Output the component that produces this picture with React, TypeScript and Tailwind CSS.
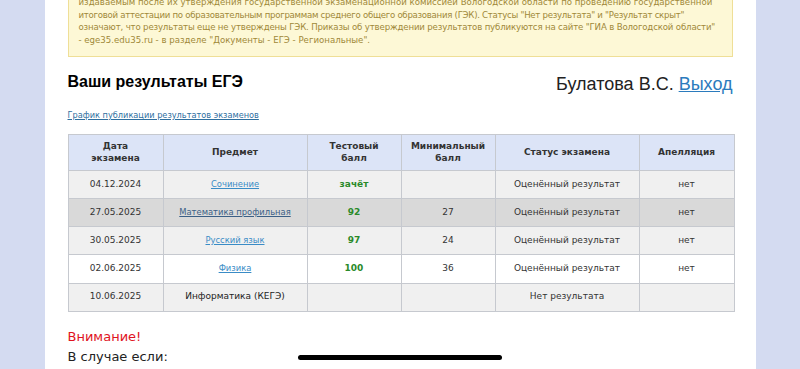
import React from 'react';

interface ExamRow {
    date: string;
    subject: string;
    link?: 'fresh' | 'visited';
    score: string;
    minScore: string;
    status: string;
    appeal: string;
    bg: string;
}

const rows: ExamRow[] = [
    { date: '04.12.2024', subject: 'Сочинение', link: 'fresh', score: 'зачёт', minScore: '', status: 'Оценённый результат', appeal: 'нет', bg: 'bg-[#f0f0f0]' },
    { date: '27.05.2025', subject: 'Математика профильная', link: 'visited', score: '92', minScore: '27', status: 'Оценённый результат', appeal: 'нет', bg: 'bg-[#d9d9d9]' },
    { date: '30.05.2025', subject: 'Русский язык', link: 'fresh', score: '97', minScore: '24', status: 'Оценённый результат', appeal: 'нет', bg: 'bg-[#f0f0f0]' },
    { date: '02.06.2025', subject: 'Физика', link: 'fresh', score: '100', minScore: '36', status: 'Оценённый результат', appeal: 'нет', bg: 'bg-white' },
    { date: '10.06.2025', subject: 'Информатика (КЕГЭ)', score: '', minScore: '', status: 'Нет результата', appeal: '', bg: 'bg-[#f0f0f0]' },
];

const verdana = "font-['DejaVu_Sans','Verdana',sans-serif]";
const cell = 'border border-[#c6c9cf] text-center align-middle p-0';

export default function App() {
    return (
        <div className="min-h-screen bg-[#d4dbf1] flex justify-center overflow-hidden relative">
            <div className="w-[711px] bg-white px-[23px] pb-10">
                {/* уведомление */}
                <div className={`-mt-[4px] bg-[#fdf8d6] border border-[#efdf97] border-t-0 pl-[10px] pr-2 pb-[9px] text-[8.6px] leading-[12.7px] text-[#a08838] whitespace-nowrap ${verdana}`}>
                    <span>издаваемым после их утверждения государственной экзаменационной комиссией Вологодской области по проведению государственной</span><br />
                    <span className="tracking-[-0.28px]">итоговой аттестации по образовательным программам среднего общего образования (ГЭК). Статусы "Нет результата" и "Результат скрыт"</span><br />
                    <span className="tracking-[-0.16px]">означают, что результаты еще не утверждены ГЭК. Приказы об утверждении результатов публикуются на сайте "ГИА в Вологодской области"</span><br />
                    <span>- ege35.edu35.ru - в разделе "Документы - ЕГЭ - Региональные".</span>
                </div>

                <div className="flex justify-between items-center mt-[12px] h-[26px] font-['Liberation_Sans',Arial,sans-serif]">
                    <h1 className="text-[16px] font-bold text-black">Ваши результаты ЕГЭ</h1>
                    <div className="text-[18px] text-[#222] mt-[5px]">
                        Булатова В.С. <a href="#" className="text-[#2b7bbd] underline">Выход</a>
                    </div>
                </div>

                <div className={`mt-[14px] text-[8.2px] leading-[12px] ${verdana}`}>
                    <a href="#" className="text-[#2f6f9f] underline">График публикации результатов экзаменов</a>
                </div>

                <table className={`mt-[13px] w-[666px] border-collapse table-fixed text-[9px] text-[#333] ${verdana}`}>
                    <colgroup>
                        <col className="w-[95px]" />
                        <col className="w-[144px]" />
                        <col className="w-[94px]" />
                        <col className="w-[94px]" />
                        <col className="w-[144px]" />
                        <col className="w-[95px]" />
                    </colgroup>
                    <thead>
                        <tr className="h-[36px] bg-[#dce4f7] leading-[12px] font-bold">
                            <th className={cell}>Дата<br />экзамена</th>
                            <th className={cell}>Предмет</th>
                            <th className={cell}>Тестовый<br />балл</th>
                            <th className={cell}>Минимальный<br />балл</th>
                            <th className={cell}>Статус экзамена</th>
                            <th className={cell}>Апелляция</th>
                        </tr>
                    </thead>
                    <tbody>
                        {rows.map((r) => (
                            <tr key={r.date} className={`h-[28.2px] ${r.bg}`}>
                                <td className={cell}>{r.date}</td>
                                <td className={cell}>
                                    {r.link ? (
                                        <a href="#" className={`underline text-[8.4px] ${r.link === 'visited' ? 'text-[#3b5f86]' : 'text-[#3a8cc6]'}`}>{r.subject}</a>
                                    ) : (
                                        <span className="text-[#222]">{r.subject}</span>
                                    )}
                                </td>
                                <td className={`${cell} font-bold text-[#2a8a2a]`}>{r.score}</td>
                                <td className={cell}>{r.minScore}</td>
                                <td className={cell}>{r.status}</td>
                                <td className={cell}>{r.appeal}</td>
                            </tr>
                        ))}
                    </tbody>
                </table>

                <div className={`mt-[15px] text-[13px] leading-[20px] ${verdana}`}>
                    <p className="text-[#e0141e]">Внимание!</p>
                    <p className="text-[#222]">В случае если:</p>
                </div>
            </div>

            {/* индикатор iOS */}
            <div className="absolute left-[298px] top-[355px] w-[204px] h-[5px] rounded-full bg-black" />
        </div>
    );
}
